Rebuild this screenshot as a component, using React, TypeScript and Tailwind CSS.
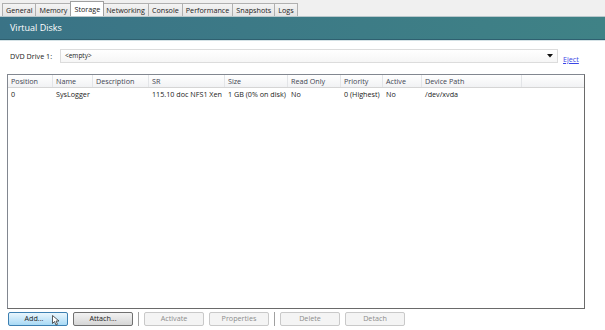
import React from "react";

const tabs = ["General", "Memory", "Storage", "Networking", "Console", "Performance", "Snapshots", "Logs"];

const cols = [
  { label: "Position", w: "w-[45px]" },
  { label: "Name", w: "w-[40px]" },
  { label: "Description", w: "w-[56px]" },
  { label: "SR", w: "w-[76px]" },
  { label: "Size", w: "w-[63px]" },
  { label: "Read Only", w: "w-[53px]" },
  { label: "Priority", w: "w-[42px]" },
  { label: "Active", w: "w-[39px]" },
  { label: "Device Path", w: "w-[100px]" },
];

const row = ["0", "SysLogger", "", "115.10 doc NFS1 Xen", "1 GB (0% on disk)", "No", "0 (Highest)", "No", "/dev/xvda"];

function Btn({ label, primary, disabled }: { label: string; primary?: boolean; disabled?: boolean }) {
  const base = "w-[60px] h-[14px] flex items-center justify-center rounded-[2px] border text-[7.2px] leading-none";
  if (primary)
    return (
      <div className={`${base} relative border-[#3c7fb1] bg-gradient-to-b from-[#eaf6fd] to-[#a7d9f5] text-[#222]`}>
        <span className="-ml-2">Add...</span>
        <svg className="absolute left-[43px] top-[2px]" width="8" height="11" viewBox="0 0 8 11">
          <path d="M0.5 0.5 L0.5 8.5 L2.5 6.5 L4 10 L5.5 9.3 L4 6 L7 6 Z" fill="#fff" stroke="#333" strokeWidth="0.8" />
        </svg>
      </div>
    );
  if (disabled)
    return <div className={`${base} border-[#c9c9c9] bg-[#f4f4f4] text-[#8d8d8d]`}>{label}</div>;
  return <div className={`${base} border-[#707070] bg-gradient-to-b from-[#f2f2f2] to-[#d6d6d6] text-[#222]`}>{label}</div>;
}

function Sep() {
  return <div className="w-px h-[14px] bg-[#a0a0a0]" />;
}

export default function App() {
  return (
    <div className="w-[605px] h-[330px] bg-white flex flex-col overflow-hidden" style={{ fontFamily: '"Open Sans", "Noto Sans", sans-serif' }}>
      {/* Tab strip */}
      <div className="h-[16px] bg-[#f0f0f0] flex items-end pl-[2px] text-[7.2px] text-[#222]">
        {tabs.map((t) =>
          t === "Storage" ? (
            <div key={t} className="h-[15px] px-[3px] bg-white border border-b-0 border-[#a0a0a0] flex items-center -mx-px relative z-10">
              {t}
            </div>
          ) : (
            <div key={t} className="h-[13px] px-[3px] bg-gradient-to-b from-[#f4f4f4] to-[#e4e4e4] border border-b-0 border-l-0 first:border-l border-[#b0b0b0] flex items-center">
              {t}
            </div>
          )
        )}
      </div>

      {/* Section header */}
      <div className="h-[24px] bg-gradient-to-r from-[#3a7386] to-[#3f8286] border-t border-[#b9c8cc] border-b border-b-[#2f6070] flex items-center px-[10px] text-white text-[9px]">
        Virtual Disks
      </div>
      <div className="h-px bg-[#d4e2e6]" />

      {/* DVD drive */}
      <div className="flex items-center mt-[8px] h-[14px] pl-[10px] text-[7.2px] text-[#222]">
        <span className="w-[50px]">DVD Drive 1:</span>
        <div className="w-[498px] h-[14px] border border-[#dcdcdc] bg-gradient-to-b from-white to-[#f6f6f6] flex items-center justify-between px-[4px]">
          <span className="text-[6.5px]">&lt;empty&gt;</span>
          <svg width="6" height="4" viewBox="0 0 6 4"><path d="M0 0 L6 0 L3 3.5 Z" fill="#111" /></svg>
        </div>
        <span className="ml-[5px] mt-[6px] text-[7.2px] text-[#3b46e6] underline">Eject</span>
      </div>

      {/* Table */}
      <div className="ml-[7px] mt-[11px] w-[578px] h-[235px] border border-[#828790] border-r-[#6a6a6a] border-b-[#6a6a6a] flex flex-col text-[7.2px] text-[#222]">
        <div className="h-[13px] flex bg-gradient-to-b from-white to-[#f1f2f4] border-b border-[#d5d5d5]">
          {cols.map((c) => (
            <div key={c.label} className={`${c.w} h-full pl-[3px] flex items-center border-r border-[#e3e5e8] text-[#3f4552]`}>
              {c.label}
            </div>
          ))}
          <div className="flex-1" />
        </div>
        <div className="h-[13px] flex items-center">
          {cols.map((c, i) => (
            <div key={c.label} className={`${c.w} pl-[3px] whitespace-nowrap`}>
              {row[i]}
            </div>
          ))}
        </div>
      </div>

      {/* Buttons */}
      <div className="flex items-center gap-[5px] ml-[8px] mt-[3px]">
        <Btn label="Add..." primary />
        <Btn label="Attach..." />
        <Sep />
        <Btn label="Activate" disabled />
        <Btn label="Properties" disabled />
        <Sep />
        <Btn label="Delete" disabled />
        <Btn label="Detach" disabled />
      </div>
    </div>
  );
}
